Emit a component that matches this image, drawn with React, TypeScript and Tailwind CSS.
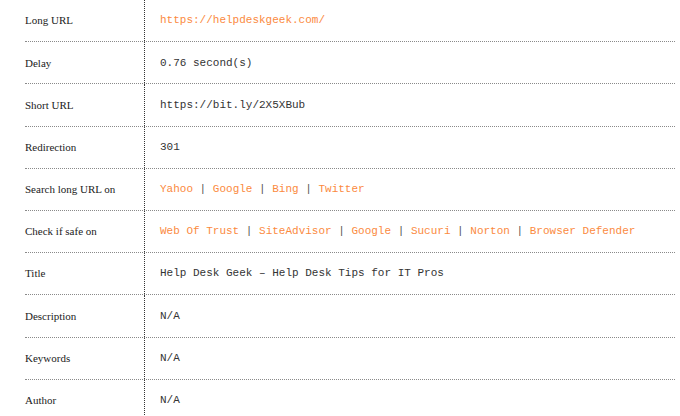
import React from "react";

const O = ({ children }: { children: React.ReactNode }) => (
  <span className="text-[#fb8a3e]">{children}</span>
);
const Sep = () => <span className="text-[#555]"> | </span>;

const rows: { label: string; value: React.ReactNode }[] = [
  { label: "Long URL", value: <O>https://helpdeskgeek.com/</O> },
  { label: "Delay", value: "0.76 second(s)" },
  { label: "Short URL", value: "https://bit.ly/2X5XBub" },
  { label: "Redirection", value: "301" },
  {
    label: "Search long URL on",
    value: (
      <>
        <O>Yahoo</O>
        <Sep />
        <O>Google</O>
        <Sep />
        <O>Bing</O>
        <Sep />
        <O>Twitter</O>
      </>
    ),
  },
  {
    label: "Check if safe on",
    value: (
      <>
        <O>Web Of Trust</O>
        <Sep />
        <O>SiteAdvisor</O>
        <Sep />
        <O>Google</O>
        <Sep />
        <O>Sucuri</O>
        <Sep />
        <O>Norton</O>
        <Sep />
        <O>Browser Defender</O>
      </>
    ),
  },
  { label: "Title", value: "Help Desk Geek – Help Desk Tips for IT Pros" },
  { label: "Description", value: "N/A" },
  { label: "Keywords", value: "N/A" },
  { label: "Author", value: "N/A" },
];

export default function App() {
  return (
    <div className="w-[680px] h-[416px] overflow-hidden bg-white pl-[25px]">
      <div className="w-[650px] flex flex-col">
        {rows.map((r, i) => (
          <div
            key={i}
            className="flex h-[42.2px] border-b border-dotted border-[#8a8a8a] shrink-0"
          >
            <div
              className="w-[120px] shrink-0 flex items-center border-r border-dotted border-[#333] text-[11px] text-[#222]"
              style={{ fontFamily: '"Liberation Serif", "Times New Roman", serif' }}
            >
              {r.label}
            </div>
            <div
              className="flex-1 flex items-center pl-[15px] text-[11px] text-[#333] whitespace-pre"
              style={{ fontFamily: '"Liberation Mono", "Courier New", monospace' }}
            >
              {r.value}
            </div>
          </div>
        ))}
      </div>
    </div>
  );
}
